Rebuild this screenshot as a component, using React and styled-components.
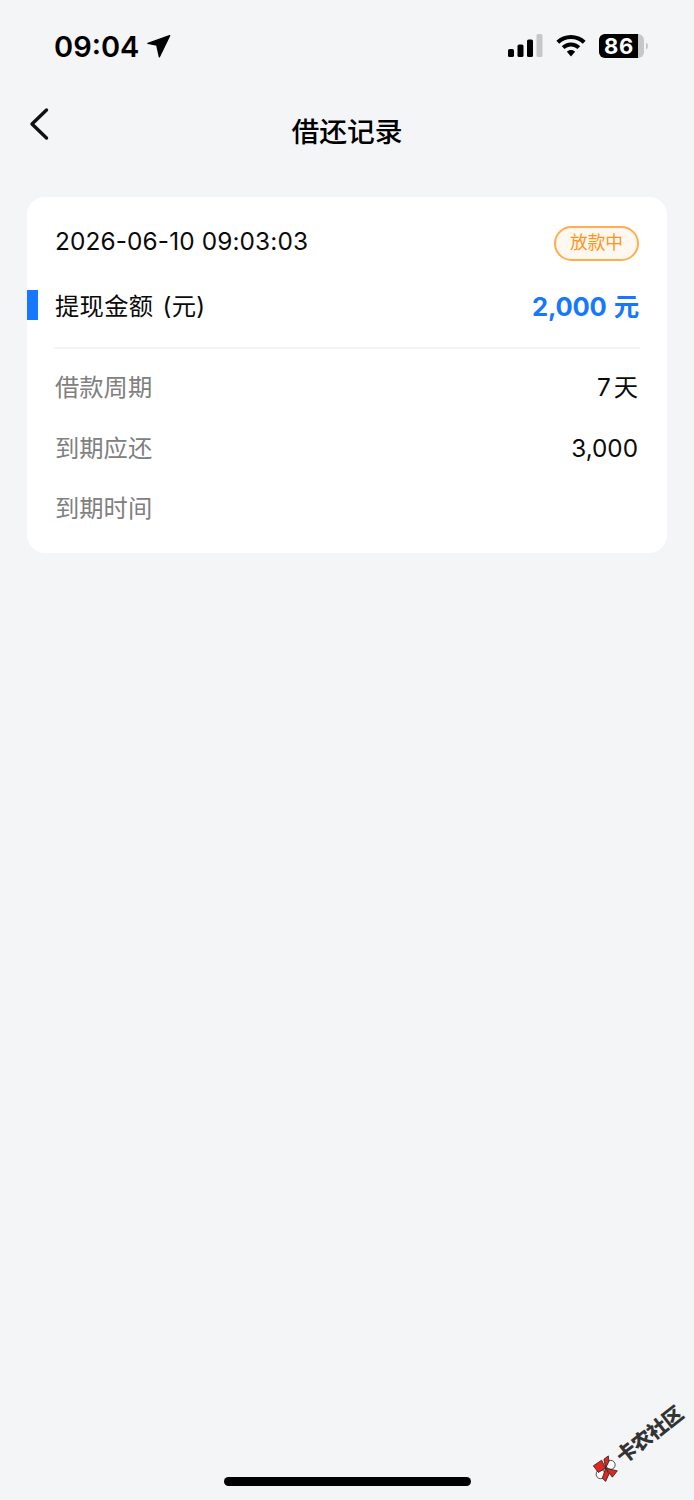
import React from "react";
import styled, { createGlobalStyle } from "styled-components";

const Global = createGlobalStyle`
  html, body { margin: 0; padding: 0; background: #f4f5f7; }
  * { box-sizing: border-box; }
`;
const FONT = `Inter, "Noto Sans CJK SC", sans-serif`;

const Page = styled.div`
  position: relative; width: 694px; height: 1500px; overflow: hidden;
  background: #f4f5f7; font-family: ${FONT}; color: #000;
  display: flex; flex-direction: column;
`;
const StatusBar = styled.div`
  height: 92px; padding: 0 46px 0 54px;
  display: flex; justify-content: space-between; align-items: center;
`;
const TimeGroup = styled.div`display: flex; align-items: center; gap: 8px;`;
const Time = styled.span`font-size: 29px; font-weight: 600; line-height: 1;`;
const StatusIcons = styled.div`display: flex; align-items: center; gap: 13px;`;
const Battery = styled.div`position: relative; width: 49px; height: 24px; display: flex;`;
const BatteryText = styled.span`
  position: absolute; left: 0; top: 0; width: 40px; height: 24px;
  display: flex; align-items: center; justify-content: center;
  color: #fff; font-size: 22px; font-weight: 700; letter-spacing: .8px; line-height: 1;
`;
const Nav = styled.header`
  position: relative; height: 80px; padding-top: 2px; display: flex; align-items: center; justify-content: center;
`;
const Title = styled.h1`margin: 0; font-size: 27.8px; font-weight: 500; line-height: 1;`;
const Back = styled.button`
  position: absolute; left: 28px; top: 15px; width: 24px; height: 34px;
  padding: 0; border: 0; background: none; display: flex;
`;
const Card = styled.section`
  margin: 25px 27px 0; height: 356px; background: #fff; border-radius: 18px; padding: 26px 28px 0 27px;
  position: relative; display: flex; flex-direction: column;
`;
const TopRow = styled.div`display: flex; justify-content: space-between; align-items: center; height: 36px;`;
const DateText = styled.span`font-size: 24.4px; line-height: 1; letter-spacing: .12px; font-weight: 400; color: #0a0a0a; margin-left: 1px;`;
const Badge = styled.span`
  width: 85px; height: 35px; margin-top: 4px; border: 2px solid #ffad4d; background: #fff8f1; border-radius: 18px;
  color: #ff9419; font-size: 17.7px; display: flex; align-items: center; justify-content: center; line-height: 1;
`;
const AmountRow = styled.div`
  position: relative; height: 72px; margin: 18px -1px 0 0;
  display: flex; justify-content: space-between; align-items: center;
  border-bottom: 2px solid #f3f4f5; padding-right: 1px;
`;
const Marker = styled.i`
  position: absolute; left: -27px; top: 13px; width: 11px; height: 30px; background: #1677ff;
`;
const AmountLabel = styled.span`font-size: 24.3px; line-height: 1; color: #0a0a0a; margin: 0 0 12px 1px; word-spacing: 2px; letter-spacing: .3px;`;
const AmountValue = styled.strong`font-size: 25.6px; line-height: 1; font-weight: 700; color: #1677ff; letter-spacing: -.2px; margin-bottom: 11px; display: flex; align-items: center;`;
const AmountUnit = styled.span`margin-left: 7px; font-size: 25.5px;`;
const Details = styled.dl`margin: 8px 0 0; display: flex; flex-direction: column;`;
const DetailRow = styled.div`height: 60.5px; display: flex; justify-content: space-between; align-items: center; padding-left: 1px;`;
const Key = styled.dt`font-size: 24.3px; color: #808080; line-height: 1;`;
const Val = styled.dd`margin: 0 1px 0 0; font-size: 24.3px; color: #0a0a0a; line-height: 1;`;
const ValUnit = styled.span`margin-left: 3px;`;
const HomeBar = styled.div`
  position: absolute; left: 224px; top: 1477px; width: 247px; height: 9px; border-radius: 5px; background: #000;
`;
const Watermark = styled.div`
  position: absolute; left: 584px; top: 1409px; width: 100px; height: 74px;
  display: flex; align-items: center;
  transform: rotate(-38deg); transform-origin: 50% 50%;
`;
const WmText = styled.span`
  font-size: 20px; font-weight: 900; color: #333; white-space: nowrap; line-height: 1; letter-spacing: -0.5px;
  font-family: "Noto Sans CJK SC", sans-serif; margin-left: 2px;
`;

const Arrow = () => (
  <svg width="24" height="23" viewBox="0 0 24 23">
    <path d="M22.6 .7 L1 8.4 L9.8 10 L12.4 21.8 Z" fill="#000" stroke="#000" strokeWidth="1.4" strokeLinejoin="round" />
  </svg>
);
const Signal = () => (
  <svg width="35" height="24" viewBox="0 0 35 24">
    <rect x="0" y="15" width="6" height="8" rx="1.6" fill="#000" />
    <rect x="9.5" y="10.5" width="6" height="12.5" rx="1.6" fill="#000" />
    <rect x="19" y="5.5" width="6" height="17.5" rx="1.6" fill="#000" />
    <rect x="28.5" y="0" width="6" height="23" rx="1.6" fill="#c6c7c9" />
  </svg>
);
const Wifi = () => (
  <svg width="30" height="22" viewBox="0 0 30 22">
    <path d="M15 0 C9.3 0 4.2 2.2.4 5.8 L3.2 8.7 C6.3 5.8 10.4 4 15 4 C19.6 4 23.7 5.8 26.8 8.7 L29.6 5.8 C25.8 2.2 20.7 0 15 0 Z" fill="#000" />
    <path d="M15 7.5 C11.4 7.5 8.2 8.9 5.8 11.2 L8.6 14.1 C10.3 12.5 12.5 11.5 15 11.5 C17.5 11.5 19.7 12.5 21.4 14.1 L24.2 11.2 C21.8 8.9 18.6 7.5 15 7.5 Z" fill="#000" />
    <path d="M15 15 C13.4 15 12 15.6 10.9 16.7 L15 21.5 L19.1 16.7 C18 15.6 16.6 15 15 15 Z" fill="#000" />
  </svg>
);
const BatteryShape = () => (
  <svg width="49" height="24" viewBox="0 0 49 24">
    <rect x="0" y="0" width="45" height="24" rx="6" fill="#c6c7c9" />
    <path d="M6 0 H39 V24 H6 A6 6 0 0 1 0 18 V6 A6 6 0 0 1 6 0 Z" fill="#000" />
    <path d="M47 8.5 C48.2 9 49 10.3 49 12 C49 13.7 48.2 15 47 15.5 Z" fill="#c6c7c9" />
  </svg>
);
const Chevron = () => (
  <svg width="24" height="34" viewBox="0 0 24 34">
    <path d="M18.5 3 L4 17 L18.5 31" fill="none" stroke="#111" strokeWidth="3.4" strokeLinecap="round" strokeLinejoin="round" />
  </svg>
);
const Logo = () => (
  <svg width="28" height="28" viewBox="0 0 28 28" style={{ flex: "none" }}>
    <g transform="rotate(38 14 14)" stroke="#222" strokeWidth=".8">
      <circle cx="19" cy="10.7" r="4.5" fill="#fff" />
      <circle cx="9" cy="20" r="4.5" fill="#fff" />
      <path d="M1.7 11.7 L10 6 L14 14 L6.7 18.3 Z" fill="#e0281e" />
      <path d="M12.3 5 L16.7 1.7 L17.3 7.3 L14 14 Z" fill="#e0281e" />
      <path d="M14 14 L25.7 16.7 L20.7 23 Z" fill="#e0281e" />
      <path d="M14 14 L17.3 20 L14 27.3 L10.7 24 Z" fill="#e0281e" />
    </g>
  </svg>
);

export default function App() {
  return (
    <Page>
      <Global />
      <StatusBar>
        <TimeGroup>
          <Time>09:04</Time>
          <Arrow />
        </TimeGroup>
        <StatusIcons>
          <Signal />
          <Wifi />
          <Battery>
            <BatteryShape />
            <BatteryText>86</BatteryText>
          </Battery>
        </StatusIcons>
      </StatusBar>
      <Nav>
        <Back aria-label="返回"><Chevron /></Back>
        <Title>借还记录</Title>
      </Nav>
      <Card>
        <TopRow>
          <DateText>2026-06-10 09:03:03</DateText>
          <Badge>放款中</Badge>
        </TopRow>
        <AmountRow>
          <Marker />
          <AmountLabel>提现金额 (元)</AmountLabel>
          <AmountValue>2,000<AmountUnit>元</AmountUnit></AmountValue>
        </AmountRow>
        <Details>
          <DetailRow><Key>借款周期</Key><Val>7<ValUnit>天</ValUnit></Val></DetailRow>
          <DetailRow><Key>到期应还</Key><Val>3,000</Val></DetailRow>
          <DetailRow><Key>到期时间</Key><Val /></DetailRow>
        </Details>
      </Card>
      <HomeBar />
      <Watermark>
        <Logo />
        <WmText>卡农社区</WmText>
      </Watermark>
    </Page>
  );
}
